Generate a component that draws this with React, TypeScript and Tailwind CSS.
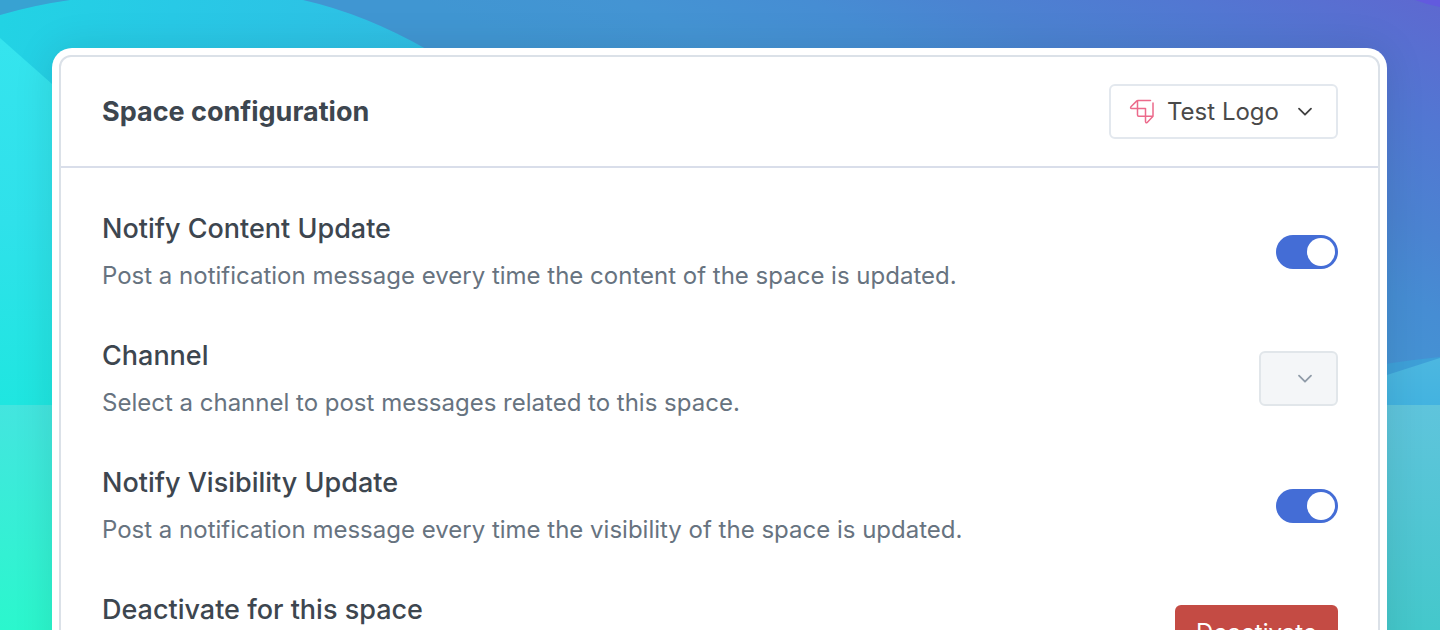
import { useState } from "react";
import type { ReactNode } from "react";

function Background() {
  return (
    <svg
      aria-hidden="true"
      className="absolute inset-0 h-full w-full"
      viewBox="0 0 1440 630"
      preserveAspectRatio="none"
    >
      <defs>
        <linearGradient id="sky" gradientUnits="userSpaceOnUse" x1="1236" y1="408" x2="1440" y2="0">
          <stop offset="0" stopColor="#4096d2" />
          <stop offset="0.2" stopColor="#4494d3" />
          <stop offset="0.38" stopColor="#468dd3" />
          <stop offset="0.53" stopColor="#4b83d1" />
          <stop offset="0.75" stopColor="#5277d2" />
          <stop offset="1" stopColor="#5e68d0" />
        </linearGradient>
        <linearGradient id="hill" gradientUnits="userSpaceOnUse" x1="0" y1="20" x2="420" y2="80">
          <stop offset="0" stopColor="#22d3e4" />
          <stop offset="0.4" stopColor="#28c9e6" />
          <stop offset="1" stopColor="#30bee4" />
        </linearGradient>
        <linearGradient id="shore" gradientUnits="userSpaceOnUse" x1="0" y1="40" x2="0" y2="405">
          <stop offset="0" stopColor="#35e4ee" />
          <stop offset="0.5" stopColor="#2fe1ea" />
          <stop offset="1" stopColor="#1fe6e0" />
        </linearGradient>
        <linearGradient id="meadow" gradientUnits="userSpaceOnUse" x1="0" y1="405" x2="0" y2="630">
          <stop offset="0" stopColor="#43e5df" />
          <stop offset="1" stopColor="#2bf7cd" />
        </linearGradient>
        <linearGradient id="lake" gradientUnits="userSpaceOnUse" x1="0" y1="405" x2="0" y2="630">
          <stop offset="0" stopColor="#5fc4dc" />
          <stop offset="1" stopColor="#44c8cb" />
        </linearGradient>
        <linearGradient id="wave" gradientUnits="userSpaceOnUse" x1="0" y1="360" x2="0" y2="405">
          <stop offset="0" stopColor="#4cb7e0" />
          <stop offset="1" stopColor="#43b3e0" />
        </linearGradient>
      </defs>
      <rect width="1440" height="630" fill="url(#sky)" />
      <path d="M1415 0Q1428 5 1440 7V0Z" fill="#625ade" />
      <path d="M0 0H70Q34 5 0 15Z" fill="#38a2d2" />
      <path d="M0 15Q34 5 70 0H303Q365 14 428 50L600 160H0Z" fill="url(#hill)" />
      <path d="M0 38L52 84L140 170V405H0Z" fill="url(#shore)" />
      <rect y="405" width="720" height="225" fill="url(#meadow)" />
      <path d="M1340 372Q1390 362 1440 357V405H1340Z" fill="#3ea0d8" />
      <path d="M1340 392L1387 375L1440 358V405H1340Z" fill="url(#wave)" />
      <rect x="720" y="405" width="720" height="225" fill="url(#lake)" />
    </svg>
  );
}

function Chevron({ className }: { className: string }) {
  return (
    <svg
      aria-hidden="true"
      viewBox="0 0 16 10"
      fill="none"
      stroke="currentColor"
      strokeWidth="1.8"
      strokeLinecap="round"
      strokeLinejoin="round"
      className={`pointer-events-none absolute right-[25px] h-[10px] w-4 ${className}`}
    >
      <path d="M2 1.700L8 7.700L14 1.700" />
    </svg>
  );
}

function SpaceLogo() {
  return (
    <svg
      aria-hidden="true"
      viewBox="0 0 26 26"
      fill="none"
      stroke="#ec6a8b"
      strokeWidth="1.5"
      strokeLinecap="round"
      strokeLinejoin="round"
      className="pointer-events-none absolute left-5 h-[26px] w-[26px]"
    >
      <path d="M21.500 1.500H9Q8.200 1.500 7.600 2.100L1.900 7.800Q1 9.200 2.600 9.500H16.500V22.700Q16.900 24.500 18.200 23.500L23.300 18.100Q24 17.500 24 16.500V4" />
      <path d="M8.500 1.900V16.100Q8.500 17.300 9.700 17.300H23.600" />
    </svg>
  );
}

function Toggle({ id }: { id: string }) {
  const [on, setOn] = useState(true);
  return (
    <div className="relative shrink-0">
      <input
        id={id}
        type="checkbox"
        role="switch"
        checked={on}
        onChange={(e) => setOn(e.target.checked)}
        className="peer block h-[34px] w-[62px] cursor-pointer appearance-none rounded-full bg-gray-300 checked:bg-[#446dd6]"
      />
      <span className="pointer-events-none absolute top-[3px] left-[3px] size-7 rounded-full bg-white peer-checked:left-[31px]" />
    </div>
  );
}

function Row({
  title,
  description,
  htmlFor,
  children,
}: {
  title: string;
  description?: string;
  htmlFor: string;
  children: ReactNode;
}) {
  return (
    <div className="flex min-h-[85px] items-center justify-between gap-8">
      <div className="self-start">
        <label htmlFor={htmlFor} className="block text-[27px] leading-10 font-medium text-[#3d464f]">
          {title}
        </label>
        {description && (
          <p className="mt-[9px] text-2xl leading-9 text-[#677380]">{description}</p>
        )}
      </div>
      {children}
    </div>
  );
}

export default function App() {
  return (
    <div className="relative h-screen overflow-hidden bg-[#4494d2] font-['Inter',sans-serif]">
      <Background />
      <main className="relative mr-[53px] ml-[52px] mt-12 rounded-[20px] bg-white p-[7px] shadow-[0_0_40px_rgba(0,0,0,0.1)]">
        <section className="rounded-xl border-2 border-[#dbe1e8]">
          <header className="flex items-center justify-between border-b-2 border-[#d9deea] py-[27px] pr-10 pl-[41px]">
            <h1 className="text-[27px] leading-10 font-bold text-[#3d464f]">Space configuration</h1>
            <div className="relative flex items-center">
              <SpaceLogo />
              <select
                aria-label="Space"
                className="h-[55px] w-[229px] appearance-none rounded-md border-2 border-[#e3e8ee] bg-white pl-14 text-2xl text-[#4a4a4a]"
              >
                <option>Test Logo</option>
              </select>
              <Chevron className="text-[#404040]" />
            </div>
          </header>
          <div className="flex flex-col gap-[42px] py-[41px] pr-10 pl-[41px]">
            <Row
              title="Notify Content Update"
              description="Post a notification message every time the content of the space is updated."
              htmlFor="content-update"
            >
              <Toggle id="content-update" />
            </Row>
            <Row
              title="Channel"
              description="Select a channel to post messages related to this space."
              htmlFor="channel"
            >
              <div className="relative flex items-center">
                <select
                  id="channel"
                  disabled
                  className="h-[55px] w-[79px] appearance-none rounded-md border-2 border-[#e1e6ea] bg-[#f4f6f8] opacity-100"
                />
                <Chevron className="text-[#8f9ba8]" />
              </div>
            </Row>
            <Row
              title="Notify Visibility Update"
              description="Post a notification message every time the visibility of the space is updated."
              htmlFor="visibility-update"
            >
              <Toggle id="visibility-update" />
            </Row>
            <Row title="Deactivate for this space" htmlFor="deactivate">
              <button
                id="deactivate"
                type="button"
                className="h-[55px] w-[163px] rounded-md bg-[#c44b44] text-2xl text-white"
              >
                Deactivate
              </button>
            </Row>
          </div>
        </section>
      </main>
    </div>
  );
}
